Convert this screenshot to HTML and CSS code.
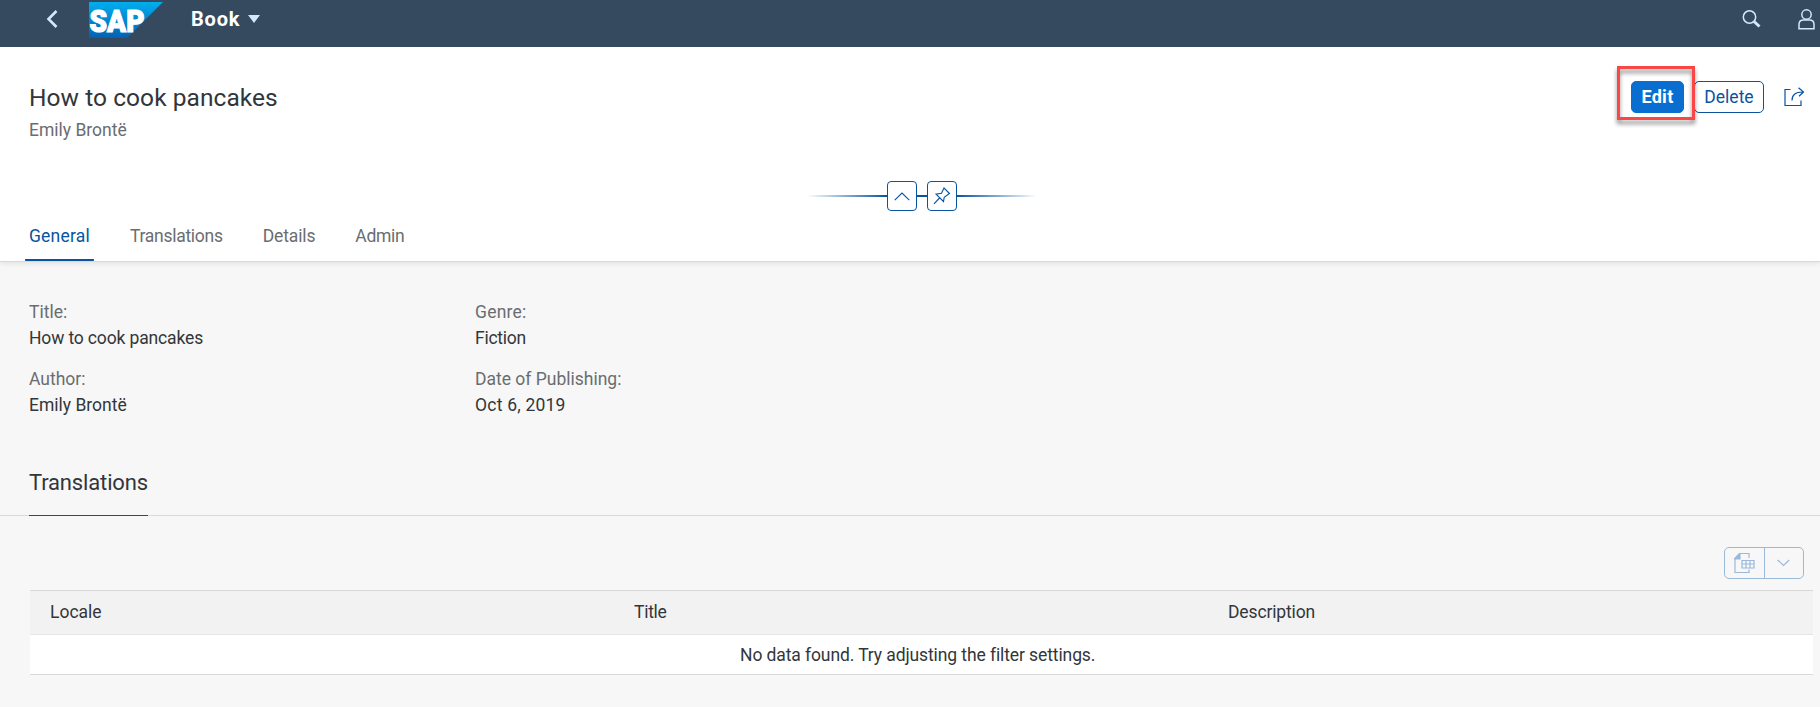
FILE: index.html
```html
<!DOCTYPE html>
<html lang="en">
<head>
<meta charset="utf-8">
<title>Book</title>
<link rel="stylesheet" href="styles.css">
</head>
<body>
<header class="shell">
  <svg class="back" width="12" height="18" viewBox="0 0 12 18"><path d="M10.500 1 2.500 9l8 8"/></svg>
  <svg class="logo" width="74" height="36" viewBox="0 0 74 36">
    <defs><linearGradient id="sap" x1="0" y1="0" x2="0" y2="1"><stop offset="0" stop-color="#00aeef"/><stop offset="1" stop-color="#0461b2"/></linearGradient></defs>
    <path d="M0 0H74L38 36H0Z" fill="url(#sap)"/>
    <text class="logo-text" x="0.500" y="29.500" textLength="55" lengthAdjust="spacingAndGlyphs">SAP</text>
  </svg>
  <h1 class="app">Book</h1>
  <svg class="caret" width="12" height="8" viewBox="0 0 12 8"><path d="M0 0h12L6 8z"/></svg>
  <svg class="search" width="19" height="18" viewBox="0 0 19 18"><circle cx="7.500" cy="7" r="6.200"/><path class="handle" d="M12 11.500 17.500 16.500"/></svg>
  <svg class="user" width="17" height="21" viewBox="0 0 17 21"><circle cx="8.500" cy="5.500" r="4.700"/><path d="M1 19.700V15.500c0-3 2-4.500 4.500-4.500h6c2.500 0 4.500 1.500 4.500 4.500v4.200z"/></svg>
</header>
<section class="object">
  <div class="object-top">
    <div>
      <h2 class="title">How to cook pancakes</h2>
      <p class="subtitle">Emily Brontë</p>
    </div>
    <div class="actions">
      <div class="edit-wrap"><button class="btn primary">Edit</button><span class="highlight"></span></div>
      <button class="btn">Delete</button>
      <svg class="share" width="21" height="20" viewBox="0 0 21 20"><path d="M6.500 2.500H1V18.500H17V13.500M8 13.500C8 8 11 5 19 5M14.500 .7 19.500 5l-4.500 4.300"/></svg>
    </div>
  </div>
  <div class="snap">
    <span class="line left"></span>
    <button class="square"><svg width="16" height="9" viewBox="0 0 16 9"><path d="M.7 8.200 8 1l7.300 7.200"/></svg></button>
    <span class="line mid"></span>
    <button class="square"><svg width="18" height="18" viewBox="0 0 18 18"><path d="M1 16.800 6.500 11M3 7.200 10.500 14.500 11.200 10.300 16.500 6.500 11 1 8.500 6.300z"/></svg></button>
    <span class="line right"></span>
  </div>
  <nav class="tabs">
    <a class="tab active">General</a>
    <a class="tab narrow-2">Translations</a>
    <a class="tab narrow-1">Details</a>
    <a class="tab narrow-2">Admin</a>
  </nav>
</section>
<main>
  <dl class="form">
    <div class="field"><dt>Title:</dt><dd class="narrow-1">How to cook pancakes</dd></div>
    <div class="field"><dt class="wide">Genre:</dt><dd class="narrow-2">Fiction</dd></div>
    <div class="field"><dt>Author:</dt><dd>Emily Brontë</dd></div>
    <div class="field"><dt>Date of Publishing:</dt><dd class="wide">Oct 6, 2019</dd></div>
  </dl>
  <div class="section-head"><h3 class="section-title">Translations</h3></div>
  <div class="toolbar">
    <div class="split">
      <span class="part"><svg width="21" height="21" viewBox="0 0 21 21"><path d="M0 6 6 0v6z" fill="#9bb9d9"/><path d="M6 .5h9V5M1 6V19.500H15V16.500M8 7.500h12v7.500H8zM8 11h12M12 7.500V15M16 7.500V15"/></svg></span>
      <span class="part"><svg width="13" height="8" viewBox="0 0 13 8"><path d="M.7 1 6.500 6.500 12.300 1"/></svg></span>
    </div>
  </div>
  <div class="table">
    <div class="thead"><span>Locale</span><span class="narrow-2">Title</span><span class="narrow-1">Description</span></div>
    <div class="empty">No data found. Try adjusting the filter settings.</div>
  </div>
</main>
</body>
</html>
```
FILE: styles.css
```css
* { box-sizing: border-box; }
body { margin: 0; height: 707px; overflow: hidden; background: #f7f7f7; color: #32363a; font: 17.500px/26px Roboto, "Noto Sans", sans-serif; }
h1, h2, h3, p, dl, dd { margin: 0; font-weight: 400; }
svg { display: block; fill: none; flex: none; }
button { font: inherit; padding: 0; cursor: pointer; }
.wide { letter-spacing: .22px; }
.narrow-1 { letter-spacing: -.14px; }
.narrow-2 { letter-spacing: -.27px; }

.shell { height: 47px; background: #354a5f; display: flex; align-items: flex-start; padding-left: 46px; }
.shell svg { stroke: #d1e8ff; stroke-width: 1.500; }
.shell .back { margin-top: 10px; stroke-width: 2.600; }
.shell .logo { margin: 2px 0 0 31px; stroke: none; }
.logo-text { font: 900 31px Roboto, sans-serif; fill: #fff; stroke: #fff; stroke-width: 1.200px; }
.app { margin: 6px 0 0 28px; font-size: 20px; font-weight: 700; color: #fff; letter-spacing: .8px; width: 50px; }
.shell .caret { margin: 15px 0 0 7px; fill: #d1e8ff; stroke: none; }
.shell .search { margin: 10px 0 0 auto; }
.shell .search .handle { stroke-width: 3; }
.shell .user { margin: 9px 5px 0 37px; }

.object { height: 215px; background: #fff; border-bottom: 1px solid #d9d9d9; box-shadow: 0 2px 5px rgba(0, 0, 0, .08); position: relative; }
.object-top { height: 134px; padding: 34px 15px 0 29px; display: flex; justify-content: space-between; align-items: flex-start; }
.title { font-size: 24.500px; line-height: 34px; letter-spacing: .06px; }
.subtitle { color: #6a6d70; line-height: 24px; margin-top: 3px; }
.actions { display: flex; align-items: center; }
.btn { height: 32px; width: 70px; border: 1px solid #0854a0; border-radius: 5px; background: #fff; color: #0854a0; line-height: 28px; }
.btn.primary { width: 53px; background: #0a6ed1; border-color: #0a6ed1; color: #fff; font-size: 18px; font-weight: 700; letter-spacing: .3px; display: block; }
.edit-wrap { position: relative; margin-right: 10px; }
.highlight { position: absolute; z-index: 1; left: -14px; top: -15px; width: 78px; height: 54px; border: 3px solid #fb4646; filter: drop-shadow(0 4px 2px rgba(0, 0, 0, .45)); }
.share { margin-left: 20px; stroke: #0854a0; stroke-width: 1.200; }

.snap { height: 30px; display: flex; align-items: center; padding-left: 807px; }
.square { width: 30px; height: 30px; border: 1px solid #0854a0; border-radius: 4px; background: #fff; display: flex; align-items: center; justify-content: center; }
.square svg { stroke: #0854a0; stroke-width: 1.100; }
.line { height: 2px; background: #0854a0; }
.line.left { width: 80px; background: linear-gradient(to left, #0854a0, transparent); }
.line.mid { width: 10px; }
.line.right { width: 80px; background: linear-gradient(to right, #0854a0, transparent); }

.tabs { display: flex; height: 50px; padding-left: 25px; gap: 32px; color: #6a6d70; }
.tab { padding: 12px 4px 0; height: 50px; }
.tab.active { color: #0854a0; border-bottom: 2px solid #0854a0; border-radius: 1px; letter-spacing: .2px; }

.form { display: grid; grid-template-columns: 446px 446px; row-gap: 15px; padding: 37px 0 0 29px; }
.field { height: 52px; }
dt { color: #6a6d70; }
.section-head { margin-top: 48px; height: 50px; padding-left: 29px; border-bottom: 1px solid #d9d9d9; display: flex; }
.section-title { width: 119px; height: 50px; font-size: 22px; line-height: 34px; letter-spacing: -.15px; border-bottom: 1px solid #0854a0; }
.toolbar { display: flex; justify-content: flex-end; padding: 31px 16px 11px 0; }
.split { display: flex; width: 80px; height: 32px; border: 1px solid #9bb9d9; border-radius: 5px; }
.part { flex: 1; display: flex; align-items: center; justify-content: center; }
.part + .part { border-left: 1px solid #9bb9d9; }
.split svg { stroke: #9bb9d9; stroke-width: 1.200; }
.table { margin: 0 7px 0 30px; border-top: 1px solid #d9d9d9; }
.thead { height: 44px; background: #f2f2f2; border-bottom: 1px solid #e5e5e5; display: grid; grid-template-columns: 584px 594px 1fr; padding: 8px 0 0 20px; }
.empty { height: 40px; background: #fff; border-bottom: 1px solid #d9d9d9; padding: 7px 0 0 710px; letter-spacing: -.1px; }
```
